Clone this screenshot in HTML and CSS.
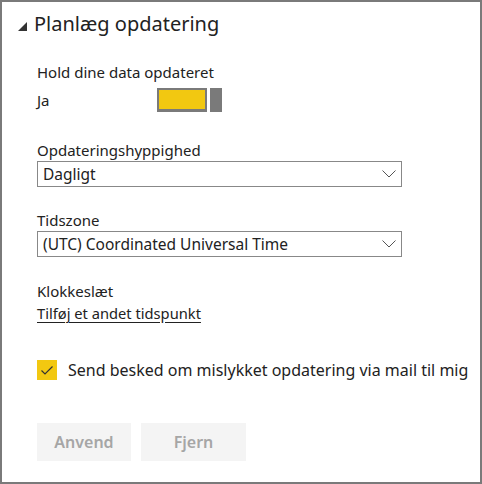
FILE: index.html
```html
<!DOCTYPE html>
<html lang="da">
<head>
<meta charset="utf-8">
<link rel="stylesheet" href="styles.css">
</head>
<body>
<div class="panel">
  <div class="header">
    <svg class="caret" width="9" height="9" viewBox="0 0 9 9"><polygon points="9,0 9,9 0,9" fill="#333"/></svg>
    <span class="title">Planlæg opdatering</span>
  </div>
  <div class="content">
    <div class="label">Hold dine data opdateret</div>
    <div class="toggle-row">
      <span class="ja">Ja</span>
      <span class="toggle"><span class="track"></span><span class="thumb"></span></span>
    </div>

    <div class="label label-freq">Opdateringshyppighed</div>
    <div class="select"><span>Dagligt</span>
      <svg class="chev" width="14" height="8" viewBox="0 0 14 8"><polyline points="0.5,0.5 7,7 13.5,0.5" fill="none" stroke="#555" stroke-width="1"/></svg>
    </div>

    <div class="label label-tz">Tidszone</div>
    <div class="select"><span>(UTC) Coordinated Universal Time</span>
      <svg class="chev" width="14" height="8" viewBox="0 0 14 8"><polyline points="0.5,0.5 7,7 13.5,0.5" fill="none" stroke="#555" stroke-width="1"/></svg>
    </div>

    <div class="label label-time">Klokkeslæt</div>
    <a class="link" href="#">Tilføj et andet tidspunkt</a>

    <div class="check-row">
      <span class="checkbox">
        <svg width="12" height="9" viewBox="0 0 12 9"><polyline points="0.5,4.5 4,8 11.5,0.5" fill="none" stroke="#333" stroke-width="1.2"/></svg>
      </span>
      <span class="check-label">Send besked om mislykket opdatering via mail til mig</span>
    </div>

    <div class="buttons">
      <button class="btn btn-apply">Anvend</button>
      <button class="btn btn-remove">Fjern</button>
    </div>
  </div>
</div>
</body>
</html>
```
FILE: styles.css
```css
html, body {
  margin: 0;
  padding: 0;
  background: #fff;
}
.panel {
  width: 482px;
  height: 484px;
  box-sizing: border-box;
  border: 2px solid #7a7a7a;
  font-family: "Noto Sans", "Open Sans", sans-serif;
  color: #222;
}
.header {
  display: flex;
  align-items: center;
  padding: 8px 0 0 16px;
  height: 28px;
}
.caret {
  display: block;
  margin-top: 4px;
}
.title {
  font-size: 20px;
  margin-left: 7px;
  line-height: 28px;
}
.content {
  padding: 24px 0 0 35px;
  display: flex;
  flex-direction: column;
  align-items: flex-start;
}
.label {
  font-size: 15px;
  line-height: 20px;
}
.toggle-row {
  display: flex;
  align-items: center;
  height: 24px;
  margin-top: 6px;
}
.ja {
  font-size: 15px;
  width: 120px;
}
.toggle {
  display: flex;
  gap: 3px;
  height: 24px;
}
.track {
  width: 46px;
  height: 19px;
  background: #f2c811;
  border: 2px solid #7a7a7a;
  border-bottom-width: 3px;
}
.thumb {
  width: 12px;
  height: 24px;
  background: #7a7a7a;
}
.label-freq { margin-top: 28px; }
.label-tz { margin-top: 23px; }
.label-time { margin-top: 24px; }
.select {
  box-sizing: border-box;
  width: 365px;
  height: 26px;
  margin-top: 1px;
  border: 1px solid #888;
  display: flex;
  align-items: center;
  justify-content: space-between;
  padding: 0 5px 0 5px;
  font-size: 15.5px;
}
.link {
  font-size: 14.7px;
  color: #222;
  text-decoration: underline;
  text-underline-offset: 3px;
  margin-top: 2px;
}
.check-row {
  display: flex;
  align-items: center;
  margin-top: 36px;
}
.checkbox {
  width: 20px;
  height: 20px;
  background: #f2c811;
  display: flex;
  align-items: center;
  justify-content: center;
}
.check-label {
  font-size: 16px;
  margin-left: 11px;
}
.buttons {
  display: flex;
  gap: 10px;
  margin-top: 42px;
}
.btn {
  height: 38px;
  border: none;
  background: #f4f4f4;
  color: #a6a6a6;
  font-family: "Noto Sans", "Open Sans", sans-serif;
  font-weight: 600;
  font-size: 16px;
  padding: 0;
}
.btn-apply { width: 94px; }
.btn-remove { width: 105px; }
```
